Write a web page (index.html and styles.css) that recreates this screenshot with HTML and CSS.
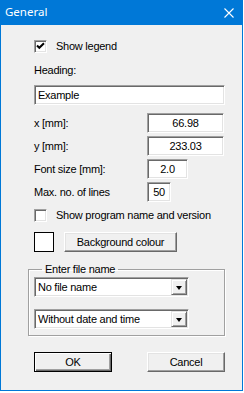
FILE: index.html
```html
<!DOCTYPE html>
<html>

<head>
    <title>General</title>
    <meta http-equiv="Content-Type" content="text/html; charset=utf-8" />
    <link rel="stylesheet" href="styles.css">
</head>

<body>
    <div class="window">
        <div class="titlebar">
            <span class="title">General</span>
            <svg class="close" width="10" height="10" viewBox="0 0 10 10">
                <path d="M0.5 0.5 L9.5 9.5 M9.5 0.5 L0.5 9.5" stroke="#fff" stroke-width="1.1" />
            </svg>
        </div>
        <div class="content">
            <div class="check-row first-check">
                <span class="check">
                    <svg width="9" height="9" viewBox="0 0 9 9">
                        <path d="M1 3.5 L3.3 5.8 L8 1.2" stroke="#000" stroke-width="2" fill="none" />
                    </svg>
                </span>
                <span>Show legend</span>
            </div>
            <div class="heading-label">Heading:</div>
            <div class="field heading-field">Example</div>
            <div class="rows">
                <div class="row"><span class="row-label">x [mm]:</span><span class="field num w-wide">66.98</span></div>
                <div class="row"><span class="row-label">y [mm]:</span><span class="field num w-wide">233.03</span></div>
                <div class="row"><span class="row-label">Font size [mm]:</span><span class="field num w-mid">2.0</span></div>
                <div class="row"><span class="row-label">Max. no. of lines</span><span class="field num w-small">50</span></div>
            </div>
            <div class="check-row second-check">
                <span class="check off"></span>
                <span>Show program name and version</span>
            </div>
            <div class="colour-row">
                <span class="swatch"></span>
                <span class="btn bg-btn">Background colour</span>
            </div>
            <fieldset class="group">
                <legend>Enter file name</legend>
                <div class="combo">
                    <span class="combo-text">No file name</span>
                    <span class="combo-btn"><span class="arrow"></span></span>
                </div>
                <div class="combo second-combo">
                    <span class="combo-text">Without date and time</span>
                    <span class="combo-btn"><span class="arrow"></span></span>
                </div>
            </fieldset>
            <div class="buttons">
                <span class="btn default-btn">OK</span>
                <span class="btn">Cancel</span>
            </div>
        </div>
    </div>
</body>

</html>
```

FILE: styles.css
```css
body {
    margin: 0;
    background-color: #fff;
    font-family: 'Liberation Sans', Arial, sans-serif;
    font-size: 11px;
    letter-spacing: -0.25px;
    color: #000;
}
.window {
    width: 241px;
    height: 390px;
    background-color: #f0f0f0;
    border: 1px solid #0078d7;
    border-top: 0;
}
.titlebar {
    height: 25px;
    margin: 0 -1px;
    background-color: #0078d7;
    display: flex;
    align-items: center;
    justify-content: space-between;
    padding: 0 9px 0 5px;
}
.title {
    color: #fff;
    font-family: 'Noto Sans', sans-serif;
    font-size: 11.5px;
    letter-spacing: 0;
    line-height: 14px;
    margin-top: -1px;
}
.close {
    display: block;
}
.content {
    padding-left: 33px;
    line-height: 13px;
}
.check-row {
    display: flex;
    align-items: center;
    height: 13px;
    gap: 9px;
}
.first-check {
    margin-top: 15px;
}
.second-check {
    margin-top: 7px;
}
.check {
    width: 9px;
    height: 9px;
    background-color: #fff;
    border-top: 1px solid #a0a0a0;
    border-left: 1px solid #a0a0a0;
    border-bottom: 1px solid #fff;
    border-right: 1px solid #fff;
    box-shadow: inset 1px 1px #696969, inset -1px -1px #e3e3e3;
    padding: 1px;
    display: flex;
}
.check svg {
    display: block;
}
.heading-label {
    margin-top: 11px;
}
.field {
    box-sizing: border-box;
    height: 20px;
    background-color: #fff;
    border-top: 1px solid #a0a0a0;
    border-left: 1px solid #a0a0a0;
    border-bottom: 1px solid #fff;
    border-right: 1px solid #fff;
    box-shadow: inset 1px 1px #696969, inset -1px -1px #e3e3e3;
    padding: 2px 3px;
    line-height: 14px;
    white-space: nowrap;
}
.heading-field {
    margin-top: 8px;
    width: 191px;
}
.rows {
    margin-top: 8px;
    display: flex;
    flex-direction: column;
    gap: 3px;
}
.row {
    display: flex;
    align-items: center;
}
.row-label {
    width: 113px;
}
.num {
    text-align: center;
}
.w-wide {
    width: 77px;
}
.w-mid {
    width: 41px;
}
.w-small {
    width: 24px;
    padding: 2px 1px;
}
.colour-row {
    margin-top: 10px;
    display: flex;
    align-items: center;
    gap: 10px;
}
.swatch {
    box-sizing: border-box;
    width: 20px;
    height: 20px;
    background-color: #fff;
    border: 1px solid #000;
}
.btn {
    box-sizing: border-box;
    height: 20px;
    display: flex;
    align-items: center;
    justify-content: center;
    background-color: #f0f0f0;
    border-top: 1px solid #fff;
    border-left: 1px solid #fff;
    border-bottom: 1px solid #696969;
    border-right: 1px solid #696969;
    box-shadow: inset -1px -1px #a0a0a0, inset 1px 1px #e3e3e3;
}
.bg-btn {
    width: 113px;
}
.group {
    margin: 11px 0 0 -6px;
    padding: 0 5px 6px 5px;
    width: 185px;
    border: 1px solid #a0a0a0;
    box-shadow: inset 1px 1px #fff, 1px 1px #fff;
}
.group legend {
    padding: 0 3px;
    margin-left: 8px;
    line-height: 13px;
}
.combo {
    box-sizing: border-box;
    width: 155px;
    height: 20px;
    margin-top: 1px;
    display: flex;
    align-items: center;
    justify-content: space-between;
    background-color: #fff;
    border-top: 1px solid #a0a0a0;
    border-left: 1px solid #a0a0a0;
    border-bottom: 1px solid #fff;
    border-right: 1px solid #fff;
    box-shadow: inset 1px 1px #696969, inset -1px -1px #e3e3e3;
    padding: 1px 1px 1px 3px;
}
.second-combo {
    margin-top: 12px;
}
.combo-btn {
    box-sizing: border-box;
    width: 16px;
    height: 16px;
    background-color: #f0f0f0;
    border-top: 1px solid #e3e3e3;
    border-left: 1px solid #e3e3e3;
    border-bottom: 1px solid #696969;
    border-right: 1px solid #696969;
    box-shadow: inset 1px 1px #fff, inset -1px -1px #a0a0a0;
    display: flex;
    align-items: center;
    justify-content: center;
}
.arrow {
    width: 0;
    height: 0;
    border-left: 3.5px solid transparent;
    border-right: 3.5px solid transparent;
    border-top: 4px solid #000;
    margin-top: 1px;
}
.buttons {
    margin-top: 16px;
    width: 191px;
    display: flex;
    justify-content: space-between;
}
.buttons .btn {
    width: 78px;
}
.default-btn {
    border: 1px solid #000;
    box-shadow: inset 1px 1px #fff, inset -1px -1px #696969, inset -2px -2px #a0a0a0;
}
```
